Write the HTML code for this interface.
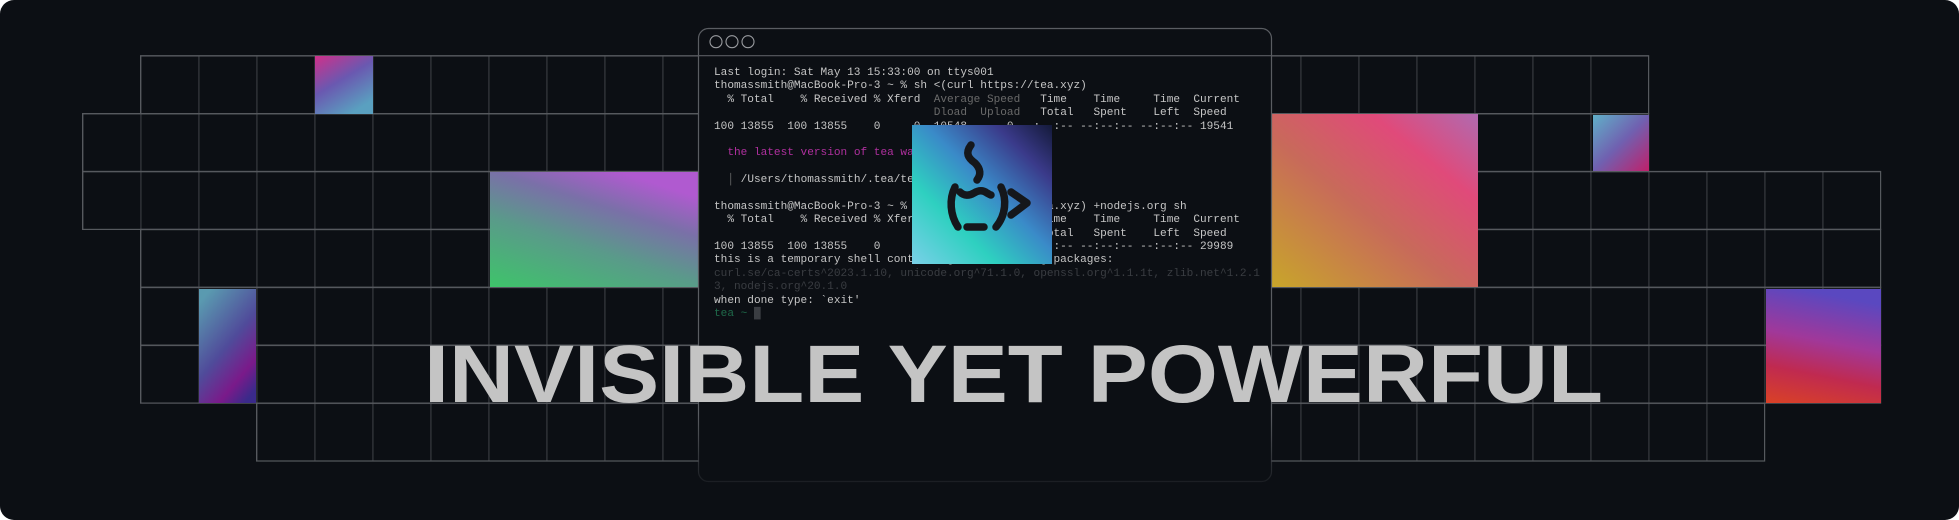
<!DOCTYPE html>
<html><head><meta charset="utf-8"><style>
html,body{margin:0;padding:0;background:#fff;width:1959px;height:520px;overflow:hidden}
#c{position:absolute;left:0;top:0;width:1959px;height:520px;background:#0c0f14;border-radius:14px;overflow:hidden}
svg{position:absolute;left:0;top:0}
pre{position:absolute;left:714px;top:67px;margin:0;font-family:"Liberation Mono",monospace;font-size:11.1px;line-height:13.39px;color:#c6c6c6;white-space:pre}
.d{color:#6a6a6a}.dd{color:#3a3d42}.p{color:#b0309f}.g{color:#1f6a4a}
</style></head><body><div id="c">
<svg width="1959" height="520" viewBox="0 0 1959 520">
<defs>
<pattern id="gp" patternUnits="userSpaceOnUse" x="140.6" y="55.7" width="58" height="57.9">
<path d="M0 0H58M0 0V57.9" stroke="#56595e" stroke-width="1.4" fill="none"/>
</pattern>
<linearGradient id="i1" x1="0" y1="0" x2="0.6" y2="1"><stop offset="0" stop-color="#d0308a"/><stop offset="0.5" stop-color="#6a58b0"/><stop offset="1" stop-color="#5aa0c0"/></linearGradient>
<linearGradient id="i2" x1="0" y1="1" x2="0.6" y2="0"><stop offset="0" stop-color="#3ec46a"/><stop offset="0.45" stop-color="#5a9a8a"/><stop offset="0.75" stop-color="#7a70a8"/><stop offset="1" stop-color="#b05ad0"/></linearGradient>
<linearGradient id="i3" x1="0.2" y1="0" x2="0.8" y2="1"><stop offset="0" stop-color="#5a9ab0"/><stop offset="0.5" stop-color="#504a9a"/><stop offset="0.8" stop-color="#7a1a8a"/><stop offset="1" stop-color="#3a2a8a"/></linearGradient>
<linearGradient id="i4" x1="0" y1="1" x2="1" y2="0"><stop offset="0" stop-color="#c8a828"/><stop offset="0.45" stop-color="#c86a5a"/><stop offset="0.75" stop-color="#e04a7a"/><stop offset="1" stop-color="#b06ab0"/></linearGradient>
<linearGradient id="i5" x1="0" y1="0" x2="1" y2="1"><stop offset="0" stop-color="#60b0c8"/><stop offset="0.5" stop-color="#7060b0"/><stop offset="1" stop-color="#c0206a"/></linearGradient>
<linearGradient id="i6" x1="0.3" y1="0" x2="0.1" y2="1"><stop offset="0" stop-color="#5a48c0"/><stop offset="0.4" stop-color="#a0389a"/><stop offset="0.7" stop-color="#c02a50"/><stop offset="1" stop-color="#d84028"/></linearGradient>
<linearGradient id="lg" x1="0" y1="1" x2="1" y2="0"><stop offset="0" stop-color="#7ad0e8"/><stop offset="0.3" stop-color="#2ed0c0"/><stop offset="0.55" stop-color="#3a8ac8"/><stop offset="0.8" stop-color="#3a3a8a"/><stop offset="1" stop-color="#141a3a"/></linearGradient>
<linearGradient id="wb" x1="0" y1="0" x2="0" y2="1"><stop offset="0.85" stop-color="#5a5d62"/><stop offset="1" stop-color="#5a5d62" stop-opacity="0.2"/></linearGradient>
</defs>
<g fill="url(#gp)" stroke="#56595e" stroke-width="1.2">
<rect x="140.6" y="55.7" width="1508" height="57.9"/>
<rect x="82.6" y="113.6" width="1566" height="57.9"/>
<rect x="82.6" y="171.5" width="1798" height="57.9"/>
<rect x="140.6" y="229.4" width="1740" height="57.9"/>
<rect x="140.6" y="287.3" width="1740" height="57.9"/>
<rect x="140.6" y="345.2" width="1740" height="57.9"/>
<rect x="256.6" y="403.1" width="1508" height="57.9"/>
</g>
<rect x="315" y="56" width="58" height="58" fill="url(#i1)"/>
<rect x="490" y="172" width="215" height="115" fill="url(#i2)"/>
<rect x="199" y="289" width="57" height="114" fill="url(#i3)"/>
<rect x="1265" y="114" width="213" height="173" fill="url(#i4)"/>
<rect x="1593" y="115" width="56" height="56" fill="url(#i5)"/>
<rect x="1766" y="289" width="115" height="114" fill="url(#i6)"/>
<rect x="698.5" y="28.5" width="573" height="453" rx="10" fill="#0c0f14" stroke="url(#wb)" stroke-width="1.2"/>
<line x1="698.5" y1="55.7" x2="1271.5" y2="55.7" stroke="#5a5d62" stroke-width="1.2"/>
<g fill="none" stroke="#9a9ca0" stroke-width="1.1"><circle cx="716" cy="41.7" r="6"/><circle cx="732" cy="41.7" r="6"/><circle cx="748" cy="41.7" r="6"/></g>
</svg>
<pre>Last login: Sat May 13 15:33:00 on ttys001
thomassmith@MacBook-Pro-3 ~ % sh &lt;(curl https://tea.xyz)
  % Total    % Received % Xferd  <span class="d">Average Speed</span>   Time    Time     Time  Current
                                 <span class="d">Dload  Upload</span>   Total   Spent    Left  Speed
100 13855  100 13855    0     0  10548      0 --:--:-- --:--:-- --:--:-- 19541

  <span class="p">the latest version of tea was installed</span>

  <span class="d">│</span> /Users/thomassmith/.tea/tea.xyz/v0/bin/tea

thomassmith@MacBook-Pro-3 ~ % sh &lt;(curl https://tea.xyz) +nodejs.org sh
  % Total    % Received % Xferd  Average Speed   Time    Time     Time  Current
                                 Dload  Upload   Total   Spent    Left  Speed
100 13855  100 13855    0     0  10548      0 --:--:-- --:--:-- --:--:-- 29989
this is a temporary shell containing the following packages:
<span class="dd">curl.se/ca-certs^2023.1.10, unicode.org^71.1.0, openssl.org^1.1.1t, zlib.net^1.2.1
3, nodejs.org^20.1.0</span>
when done type: `exit'
<span class="g">tea ~ </span><span class="dd">█</span></pre>
<svg width="1959" height="520" viewBox="0 0 1959 520">
<rect x="912" y="125" width="140" height="139" fill="url(#lg)"/>
<g transform="translate(912,125)" fill="none" stroke="#15171b" stroke-width="7.5" stroke-linecap="round" stroke-linejoin="round">
<path d="M59 20C53 28 56 33 63 38C69 44 69 50 65 55"/>
<path d="M43 62C37 74 38 90 46 102"/>
<path d="M89 62C95 74 94 90 84 102"/>
<path d="M55 102H72"/>
<path d="M48 67C52 71 57 71 62 68C67 65 71 65 75 68C77 69 78 70 79 70"/>
<path d="M99 67L115 78L99 90"/>
</g>
<text x="424" y="402" font-family="Liberation Sans, sans-serif" font-weight="bold" font-size="82" fill="#c4c4c4" textLength="1179" lengthAdjust="spacingAndGlyphs">INVISIBLE YET POWERFUL</text>
</svg>
</div></body></html>
